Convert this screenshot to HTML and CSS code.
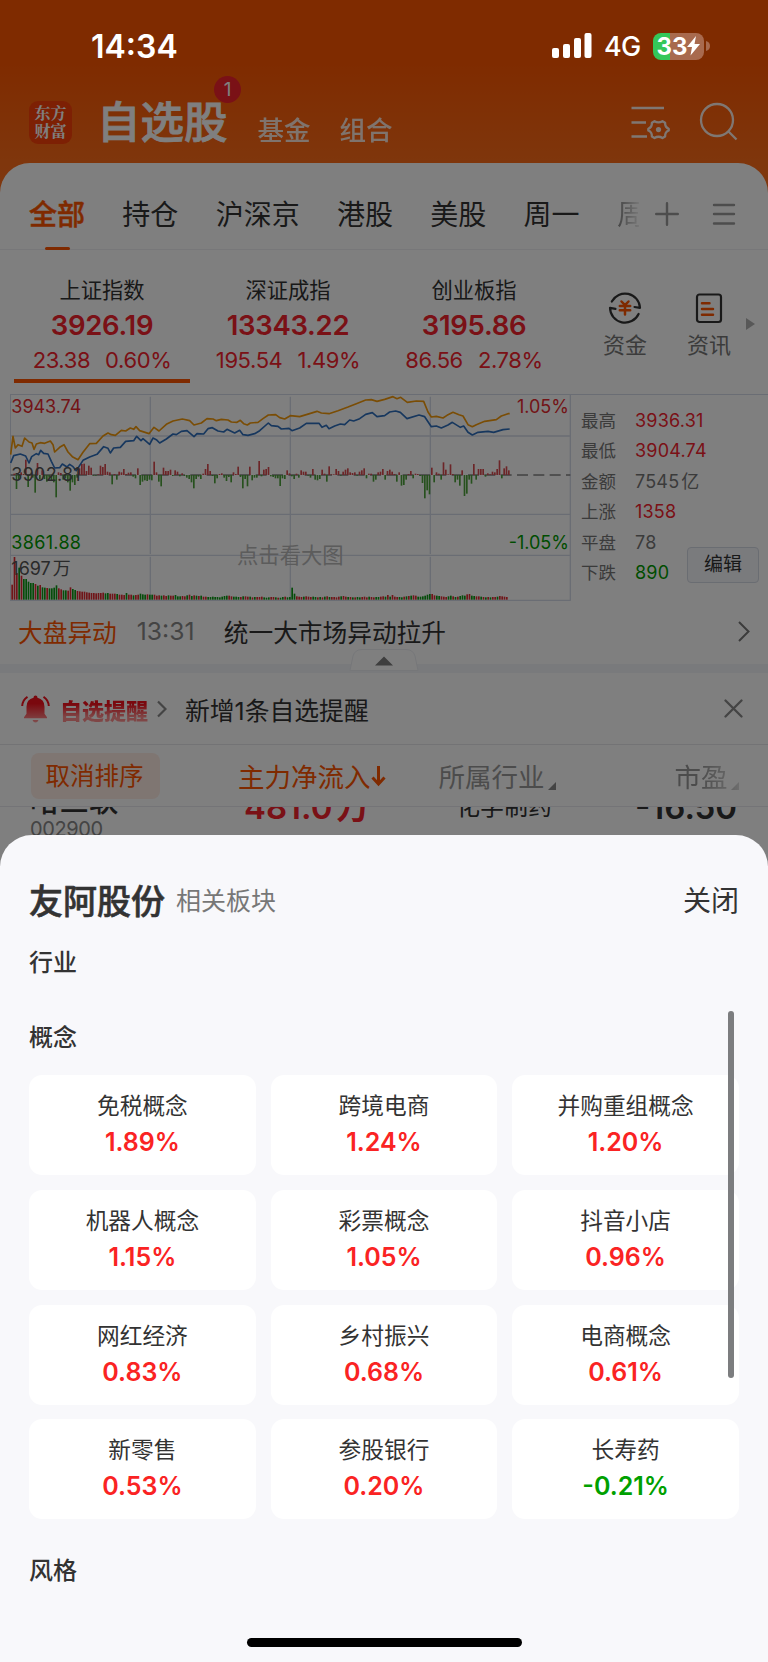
FILE: index.html
```html
<!DOCTYPE html>
<html lang="zh-CN">
<head>
    <meta charset="UTF-8">
    <meta name="viewport" content="width=device-width, initial-scale=1.0">
    <title>自选股</title>
    <link rel="stylesheet" href="styles.css">
</head>
<body>
    <div class="phone">
        <div class="status-bar">
            <span class="time">14:34</span>
            <div class="status-right">
                <svg class="signal" width="40" height="26" viewBox="0 0 40 26" fill="#fff">
                    <rect x="0" y="15" width="7" height="10" rx="2"/>
                    <rect x="11" y="11" width="7" height="14" rx="2"/>
                    <rect x="22" y="5" width="7" height="20" rx="2"/>
                    <rect x="32.5" y="0" width="7" height="25" rx="2"/>
                </svg>
                <span class="network">4G</span>
                <div class="battery">
                    <span>33</span>
                    <svg width="13" height="20" viewBox="0 0 13 20" fill="#fff"><path d="M9 0 0 11h5L3.500 19.500 13 8H7.500z"/></svg>
                </div>
                <svg class="battery-cap" width="4" height="10" viewBox="0 0 4 10"><path d="M0 0q4 1 4 5T0 10z" fill="#a86a4e"/></svg>
            </div>
        </div>

        <div class="page">
            <header class="header">
                <div class="logo"><span>东方</span><span>财富</span></div>
                <h1>自选股<i class="badge">1</i></h1>
                <a class="nav">基金</a>
                <a class="nav">组合</a>
                <svg class="icon-setting" width="40" height="36" viewBox="0 0 40 36" fill="none" stroke="#fff" stroke-width="2.300">
                    <path d="M0.500 3H33M0.500 17.500H15M0.500 31.500H16"/>
                    <path d="M23.500 16.200q4 2.500 8 0l2.600 1.500q-.2 4.500 3.600 6v1.800q-3.800 1.500-3.600 6l-2.600 1.500q-4-2.500-8 0l-2.600-1.500q.2-4.500-3.600-6v-1.800q3.800-1.500 3.600-6z" stroke-linejoin="round"/>
                    <circle cx="27.500" cy="24.600" r="2.600" fill="#fff" stroke="none"/>
                </svg>
                <svg class="icon-search" width="40" height="40" viewBox="0 0 40 40" fill="none" stroke="#fff" stroke-width="2.300">
                    <circle cx="18" cy="18" r="16"/>
                    <path d="M29.500 29.500 37.500 37.500"/>
                </svg>
            </header>

            <main class="content">
                <nav class="tabs">
                    <a class="active">全部</a>
                    <a>持仓</a>
                    <a>沪深京</a>
                    <a>港股</a>
                    <a>美股</a>
                    <a>周一</a>
                    <a class="fade">周</a>
                    <svg class="tab-add" width="24" height="24" viewBox="0 0 24 24" stroke="#9a9a9a" stroke-width="2.400" stroke-linecap="round"><path d="M1.200 12h21.600M12 1.200v21.600"/></svg>
                    <svg class="tab-menu" width="24" height="24" viewBox="0 0 24 24" stroke="#9a9a9a" stroke-width="2.400" stroke-linecap="round"><path d="M2 3h20M2 12h20M2 21.500h20"/></svg>
                </nav>

                <section class="indexes">
                    <div class="index active">
                        <div class="index-name">上证指数</div>
                        <div class="index-value">3926.19</div>
                        <div class="index-change"><span>23.38</span><span>0.60%</span></div>
                    </div>
                    <div class="index">
                        <div class="index-name">深证成指</div>
                        <div class="index-value">13343.22</div>
                        <div class="index-change"><span>195.54</span><span>1.49%</span></div>
                    </div>
                    <div class="index">
                        <div class="index-name">创业板指</div>
                        <div class="index-value">3195.86</div>
                        <div class="index-change"><span>86.56</span><span>2.78%</span></div>
                    </div>
                    <div class="shortcut money">
                        <svg width="34" height="34" viewBox="0 0 34 34" fill="none" stroke="#333" stroke-width="2.200" stroke-linecap="round" stroke-linejoin="round">
                            <path d="M3.800 10.500A15 15 0 0 1 32 16.800L26.500 16"/>
                            <path d="M30.600 23A15 15 0 0 1 2 16.800L7.500 17.800"/>
                            <path d="M13.500 10.500 17 14.200 20.500 10.500M11.800 15h10.400M11.800 19.300h10.400M17 14.500V23.500" stroke="#ff5500" stroke-width="2.500"/>
                        </svg>
                        <span>资金</span>
                    </div>
                    <div class="shortcut news">
                        <svg width="34" height="34" viewBox="0 0 34 34" fill="none" stroke="#333" stroke-width="2.200" stroke-linecap="round">
                            <rect x="5" y="3.500" width="24" height="27.500" rx="2.500"/>
                            <path d="M10 12.200h7.500M10 18h11M10 23.800h11" stroke="#ff5500" stroke-width="2.500"/>
                        </svg>
                        <span>资讯</span>
                    </div>
                    <svg class="more" width="9" height="12" viewBox="0 0 9 12"><path d="M0 0 9 6 0 12z" fill="#b0b0b0"/></svg>
                </section>

                <section class="market">
                    <svg class="chart" width="562" height="208" viewBox="0 0 1686 624">
                        <g fill="none" stroke="#d5dae8" stroke-width="4">
                            <path d="M1 0V620M1681 0V620"/>
                            <path d="M421 8V480M421 488V618M841 8V480M841 488V618M1261 8V480M1261 488V618"/>
                            <path d="M0 126H1681M0 361H1681M0 484H1681M0 619H1681"/>
                        </g>
                        <text class="watermark" x="841" y="508" text-anchor="middle">点击看大图</text>
                        <path d="M2 243H1681" stroke="#444" stroke-width="3" stroke-dasharray="33 16"/>
                        <g id="flow"></g>
                        <g id="volume"></g>
                        <polyline class="line price" points="2,207 11,185 31,180 47,186 57,207 65,188 79,179 86,182 92,169 101,178 114,180 124,202 134,222 149,221 157,210 171,219 179,211 189,218 199,230 219,199 239,189 261,181 281,158 294,163 301,177 311,162 331,160 347,142 371,140 380,127 393,140 399,134 419,151 429,132 439,137 449,147 469,135 489,120 499,122 514,112 531,110 552,128 561,119 581,120 594,104 607,101 624,111 641,114 651,106 674,117 689,109 699,122 714,124 734,119 749,110 775,87 784,95 804,97 814,105 837,103 846,110 869,102 889,88 927,88 936,100 949,94 957,104 974,96 991,90 1004,92 1019,78 1031,81 1049,74 1067,61 1087,56 1101,68 1124,65 1139,54 1157,51 1171,55 1191,74 1227,63 1244,68 1264,98 1279,96 1294,102 1314,93 1327,85 1351,100 1361,96 1374,115 1387,123 1404,115 1434,112 1451,115 1479,107 1499,105"/>
                        <polyline class="line average" points="2,182 9,127 16,162 24,152 36,157 44,132 57,144 66,147 72,166 79,150 91,146 104,148 121,141 129,152 134,174 149,160 162,152 174,174 187,188 204,197 219,175 239,149 259,148 279,126 294,117 304,122 316,124 334,109 347,111 361,102 371,106 378,98 389,110 417,119 432,100 447,111 469,91 489,81 517,75 539,80 552,93 574,87 591,74 609,75 619,80 634,76 654,78 664,84 681,85 691,79 701,89 712,93 721,87 744,85 759,74 775,63 797,62 809,71 824,75 841,65 869,68 889,62 921,52 934,57 957,59 984,50 1014,39 1039,29 1067,18 1084,17 1101,22 1124,16 1149,8 1161,14 1172,10 1192,25 1219,21 1241,22 1254,54 1264,69 1279,67 1299,72 1311,64 1329,55 1347,62 1359,66 1374,92 1387,98 1399,92 1424,82 1459,77 1474,66 1494,59 1499,59"/>
                        <text class="up" x="4" y="56" textLength="210">3943.74</text>
                        <text class="flat" x="4" y="261" textLength="208">3902.81</text>
                        <text class="down" x="4" y="464" textLength="209">3861.88</text>
                        <text class="flat" x="4" y="542">1697<tspan dx="6">万</tspan></text>
                        <text class="up" x="1677" y="56" text-anchor="end">1.05%</text>
                        <text class="down" x="1677" y="464" text-anchor="end">-1.05%</text>
                    </svg>
                    <dl class="stats">
                        <dt>最高</dt><dd class="red">3936.31</dd>
                        <dt>最低</dt><dd class="red">3904.74</dd>
                        <dt>金额</dt><dd>7545<span class="unit">亿</span></dd>
                        <dt>上涨</dt><dd class="red">1358</dd>
                        <dt>平盘</dt><dd>78</dd>
                        <dt>下跌</dt><dd class="green">890</dd>
                    </dl>
                    <button class="edit">编辑</button>
                </section>

                <section class="event">
                    <span class="event-tag">大盘异动</span>
                    <span class="event-time">13:31</span>
                    <span class="event-text">统一大市场异动拉升</span>
                    <svg width="12" height="21" viewBox="0 0 12 21" fill="none" stroke="#777" stroke-width="2"><path d="M1 1 10.500 10.500 1 20"/></svg>
                </section>
                <div class="divider">
                    <svg class="fold" width="70" height="24" viewBox="0 0 70 24">
                        <path d="M1 22.500 4 8Q6 1.500 13 1.500H57Q64 1.500 66 8L69 22.500z" fill="#fff" stroke="#eceef3"/>
                        <path d="M35 8.500 44 17.500H26z" fill="#7c7c7c"/>
                    </svg>
                </div>

                <section class="alert">
                    <svg class="bell" width="29" height="28" viewBox="0 0 29 28">
                        <defs>
                            <linearGradient id="bellColor" x1="0" y1="0" x2="0" y2="1">
                                <stop offset="0.300" stop-color="#f5101c"/>
                                <stop offset="1" stop-color="#ff9a9a"/>
                            </linearGradient>
                        </defs>
                        <path d="M14.500 0.500q2 0 2 2.200 7 1.700 7 9v7l2.500 3.600v1H3v-1l2.500-3.600v-7q0-7.300 7-9 0-2.200 2-2.200zM11.500 25h6q-1 2.500-3 2.500t-3-2.500z" fill="url(#bellColor)"/>
                        <path d="M1.200 11Q1.500 5 6.500 1.800M27.800 11Q27.500 5 22.500 1.800" fill="none" stroke="#f5101c" stroke-width="2"/>
                    </svg>
                    <b class="alert-title">自选提醒</b>
                    <svg class="alert-arrow" width="10" height="18" viewBox="0 0 10 18" fill="none" stroke="#888" stroke-width="2.200"><path d="M1 1.500 8.500 9 1 16.500"/></svg>
                    <span class="alert-text">新增1条自选提醒</span>
                    <svg class="alert-close" width="19" height="19" viewBox="0 0 19 19" stroke="#888" stroke-width="2.300" stroke-linecap="round"><path d="M1.500 1.500l16 16M17.500 1.500l-16 16"/></svg>
                </section>

                <section class="sort">
                    <span class="sort-cancel">取消排序</span>
                    <span class="sort-item current">主力净流入<svg width="15" height="22" viewBox="0 0 15 22" fill="none" stroke="#ff5500" stroke-width="3"><path d="M7.500 1v18M1.500 12.500l6 6.500 6-6.500"/></svg></span>
                    <span class="sort-item industry">所属行业<svg width="8" height="8" viewBox="0 0 8 8" fill="#888"><path d="M8 0v8H0z"/></svg></span>
                    <span class="sort-item pe">市盈<svg width="8" height="8" viewBox="0 0 8 8" fill="#888"><path d="M8 0v8H0z"/></svg></span>
                </section>

                <section class="stock">
                    <div class="stock-name">哈三联<small>002900</small></div>
                    <div class="stock-flow">481.0<span>万</span></div>
                    <div class="stock-industry">化学制药</div>
                    <div class="stock-pe">-16.50</div>
                </section>
            </main>
            <div class="mask"></div>
        </div>

        <section class="sheet">
            <div class="sheet-head">
                <h2>友阿股份</h2>
                <span class="sub">相关板块</span>
                <a class="close">关闭</a>
            </div>
            <h3 class="group-industry">行业</h3>
            <h3 class="group-concept">概念</h3>
            <div class="cards">
                <div class="card"><span>免税概念</span><b>1.89%</b></div>
                <div class="card"><span>跨境电商</span><b>1.24%</b></div>
                <div class="card"><span>并购重组概念</span><b>1.20%</b></div>
                <div class="card"><span>机器人概念</span><b>1.15%</b></div>
                <div class="card"><span>彩票概念</span><b>1.05%</b></div>
                <div class="card"><span>抖音小店</span><b>0.96%</b></div>
                <div class="card"><span>网红经济</span><b>0.83%</b></div>
                <div class="card"><span>乡村振兴</span><b>0.68%</b></div>
                <div class="card"><span>电商概念</span><b>0.61%</b></div>
                <div class="card"><span>新零售</span><b>0.53%</b></div>
                <div class="card"><span>参股银行</span><b>0.20%</b></div>
                <div class="card"><span>长寿药</span><b class="fall">-0.21%</b></div>
            </div>
            <h3 class="group-style">风格</h3>
            <div class="scrollbar"></div>
            <div class="home-indicator"></div>
        </section>
    </div>

    <script>
        // 每分钟一根柱子
        const step = 7;
        const flow = [0,4,-42,-12,8,3,46,-36,0,-8,-53,36,-12,14,-12,-20,-8,-16,-22,-67,8,6,-14,-10,-22,-47,-22,-30,-8,20,33,34,12,28,22,-2,-2,2,28,24,33,10,8,-28,3,-14,10,8,18,3,7,8,-5,-10,20,-30,-20,-16,-18,-14,-16,40,8,-20,-34,22,12,12,16,-3,14,10,-4,5,-3,-8,-12,-22,-40,-12,-5,-12,4,18,33,12,-3,-25,-10,3,5,-8,-18,-6,-22,8,3,25,-6,-40,-12,-34,25,-16,-8,-8,42,-4,16,18,24,-4,-6,-10,-10,-33,-10,-12,14,5,-4,-12,4,-8,14,10,10,-2,-8,18,-14,-16,-12,16,4,-20,26,2,2,18,12,-2,10,16,20,8,6,8,-2,10,14,20,-10,4,4,-20,-14,8,10,18,-14,12,16,10,3,-20,8,-32,-30,-14,3,12,-10,4,3,-3,-24,-70,-46,-58,22,-22,8,4,-14,38,16,2,32,3,-22,-14,-32,14,-63,-56,-14,-26,33,-14,18,18,18,-5,5,2,10,8,18,44,-10,20,26,14];
        const volume = [45,128,80,96,72,62,62,54,50,50,47,42,44,37,36,35,34,34,36,43,34,31,28,28,27,37,32,29,26,25,24,24,22,21,20,20,19,20,20,21,19,20,18,18,18,17,15,15,14,20,15,15,13,14,15,18,16,15,16,15,15,15,12,13,12,13,11,13,12,12,14,10,10,11,10,13,15,11,13,12,11,12,9,9,8,8,9,8,8,7,9,11,12,12,10,9,9,8,8,10,10,9,9,7,8,8,8,9,7,6,7,8,8,7,6,6,8,9,7,8,36,18,10,9,8,9,10,9,8,9,8,7,8,7,9,10,8,8,8,7,9,10,11,9,8,8,7,7,8,7,8,9,7,9,8,7,8,8,9,10,9,14,9,14,9,8,8,7,9,10,11,12,13,12,9,9,10,12,15,17,17,13,12,11,10,9,8,10,12,10,8,9,11,13,12,16,17,12,11,10,10,9,8,7,8,7,8,8,9,11,10,9,8];
        const colors = 'rrrgrgggggrgrggrggggrrggrrggrrrrrrrrrrrrggrrrgrrrgrrgrrgggrggrrrgrrgrrgggrrgrgrgrgrrgggggggggrrgggrgrrgrgrrrgggrrgrggrggrgrrrgrrrggrgrgrgrrrrgrrgrgrggrrrgrrggrrgrgrrrggrgrgrrggggggrrggrrrggrgrgggrrggrrgrgrgrrgr';

        function bar(x, y, height, color) {
            return `<rect x="${x}" y="${y}" width="5" height="${height}" fill="${color}"/>`;
        }

        document.getElementById('flow').innerHTML = flow.map((v, i) =>
            bar(3 + i * step, v > 0 ? 243 - v : 243, Math.abs(v), v > 0 ? '#d84b50' : '#4ea33c')
        ).join('');

        document.getElementById('volume').innerHTML = volume.map((v, i) =>
            bar(4 + i * step, 617 - v, v, i === 120 || colors[i] === 'g' ? '#0a9a14' : '#e02a32')
        ).join('');
    </script>
</body>
</html>
```
FILE: styles.css
```css
* {
    box-sizing: border-box;
}
body {
    margin: 0;
    font-family: Inter, "Noto Sans CJK SC", sans-serif;
    color: #333;
}
svg {
    display: block;
    flex: none;
}
h1, h2, h3, dl, dd {
    margin: 0;
}
.phone {
    position: relative;
    width: 768px;
    height: 1662px;
    overflow: hidden;
}

/* status bar */
.status-bar {
    position: absolute;
    z-index: 2;
    top: 0;
    left: 0;
    width: 100%;
    height: 92px;
    padding: 0 58px 0 91px;
    display: flex;
    justify-content: space-between;
    align-items: center;
    color: #fff;
}
.time {
    font-size: 32px;
    font-weight: 600;
}
.status-right {
    display: flex;
    align-items: center;
}
.network {
    margin-left: 12px;
    width: 49px;
    font-size: 27px;
    font-weight: 500;
    letter-spacing: -0.8px;
}
.battery {
    width: 51px;
    height: 27px;
    border-radius: 8px;
    background: linear-gradient(90deg, #34c759 17px, #a86a4e 17px);
    display: flex;
    align-items: center;
    justify-content: center;
    font-size: 24px;
    font-weight: 700;
    line-height: 27px;
}
.battery-cap {
    margin-left: 2px;
}

/* page under the sheet */
.page {
    position: relative;
    height: 866px;
    overflow: hidden;
    background: linear-gradient(#fe5600 60px, #ff6c18 160px, #ff7020 200px);
}
.mask {
    position: absolute;
    top: 0;
    left: 0;
    width: 100%;
    height: 100%;
    background: rgba(0, 0, 0, 0.5);
    pointer-events: none;
}
.header {
    height: 163px;
    padding: 92px 29px 0;
    display: flex;
    align-items: flex-start;
    color: #fff;
}
.logo {
    width: 43px;
    height: 43px;
    margin-top: 9px;
    padding-top: 3px;
    border-radius: 9px;
    background: #fb4008;
    text-align: center;
    font-size: 16px;
    font-weight: 700;
    line-height: 18px;
}
.logo span {
    display: block;
    font-family: "Noto Serif CJK SC", "Noto Sans CJK SC", sans-serif;
}
h1 {
    position: relative;
    margin-left: 25px;
    font-size: 43.500px;
    font-weight: 500;
    line-height: 60px;
    -webkit-text-stroke: 0.8px #fff;
}
.badge {
    position: absolute;
    left: 117px;
    top: -16px;
    width: 27px;
    height: 27px;
    border-radius: 50%;
    background: #f5222d;
    font-size: 19px;
    font-style: normal;
    font-weight: 400;
    line-height: 27px;
    text-align: center;
    -webkit-text-stroke: 0;
}
.nav {
    margin: 19px 0 0 29px;
    font-size: 26.500px;
    font-weight: 500;
    line-height: 38px;
    opacity: 0.85;
}
.nav:first-of-type {
    margin-left: 30px;
}
.icon-setting {
    margin: 13px 0 0 auto;
    opacity: 0.9;
}
.icon-search {
    margin: 10px 0 0 28px;
    opacity: 0.9;
}
.content {
    height: 703px;
    border-radius: 30px 30px 0 0;
    background: #fff;
    overflow: hidden;
}
.tabs {
    height: 87px;
    padding: 0 30px 0 29px;
    border-bottom: 1px solid #efeff2;
    display: flex;
    align-items: center;
    gap: 37.300px;
    font-size: 28px;
    line-height: 87px;
}
.tabs a {
    height: 87px;
    margin-top: 19px;
    flex: none;
}
.tabs .active {
    position: relative;
    color: #ff5500;
    font-weight: 500;
    -webkit-text-stroke: 0.5px #ff5500;
}
.tabs .active::after {
    content: "";
    position: absolute;
    left: 16px;
    bottom: 9px;
    width: 25px;
    height: 3px;
    border-radius: 2px;
    background: #ff5500;
}
.tabs .fade {
    width: 22px;
    overflow: hidden;
    background: linear-gradient(90deg, #888, #eee);
    background-clip: text;
    -webkit-background-clip: text;
    color: transparent;
}
.tab-add {
    margin: 16px 0 0 -21px;
}
.tab-menu {
    margin: 16px 0 0 -4px;
}

/* indexes */
.indexes {
    height: 144px;
    padding: 24px 0 0 14px;
    display: flex;
}
.index {
    width: 176px;
    height: 109px;
    margin-right: 10px;
    text-align: center;
}
.index.active {
    border-bottom: 4px solid #ff5500;
}
.index-name {
    font-size: 21.300px;
    line-height: 32px;
}
.index-value {
    font-size: 27.500px;
    font-weight: 600;
    line-height: 38px;
    letter-spacing: -0.3px;
    color: #f5222d;
}
.index-change {
    display: flex;
    justify-content: center;
    gap: 15px;
    font-size: 22px;
    line-height: 32px;
    letter-spacing: -0.4px;
    color: #f5222d;
}
.shortcut {
    width: 48px;
    margin: 17px 0 0 29px;
    display: flex;
    flex-direction: column;
    align-items: center;
    font-size: 22px;
    line-height: 40px;
    color: #777;
}
.news {
    margin-left: 36px;
}
.more {
    margin: 44px 0 0 13px;
}

/* chart */
.market {
    position: relative;
    height: 211px;
    padding-left: 10px;
    display: flex;
    background: linear-gradient(#d5dae8, #d5dae8) 10px 0 / 100% 1px no-repeat;
}
.chart {
    font-size: 54px;
}
.line {
    fill: none;
    stroke-width: 5;
    stroke-linejoin: round;
}
.price {
    stroke: #2e6fbd;
}
.average {
    stroke: #f59a0b;
}
.watermark {
    font-size: 64px;
    fill: #b8b8b8;
}
.up {
    fill: #e6282e;
}
.down {
    fill: #009a00;
}
.flat {
    fill: #555;
}
.stats {
    margin-left: 9px;
    padding-top: 12px;
    display: grid;
    grid-template-columns: 54px auto;
    grid-auto-rows: 30.400px;
    align-content: start;
    font-size: 17.500px;
    line-height: 30px;
    color: #777;
}
.stats dd {
    font-size: 18px;
    letter-spacing: 0.2px;
}
.unit {
    margin-left: 2px;
}
.red {
    color: #f5222d;
}
.green {
    color: #009a00;
}
.edit {
    position: absolute;
    right: 9px;
    top: 153px;
    width: 72px;
    height: 36px;
    padding: 0;
    border: 1px solid #d5dae4;
    border-radius: 4px;
    background: #f4f6fb;
    font: 19px/34px Inter, "Noto Sans CJK SC", sans-serif;
    color: #333;
}

/* market event */
.event {
    height: 59px;
    padding: 0 18px 7px 18px;
    display: flex;
    align-items: center;
    font-size: 24.700px;
}
.event-tag {
    color: #ff5500;
}
.event-time {
    width: 87px;
    margin-left: 20px;
    color: #888;
}
.event svg {
    margin-left: auto;
}
.divider {
    position: relative;
    height: 9px;
    background: #f2f4f9;
}
.fold {
    position: absolute;
    left: 349px;
    top: -16px;
}

/* alert */
.alert {
    height: 72px;
    padding: 0 25px 0 21px;
    border-bottom: 1px solid #e6e6ea;
    display: flex;
    align-items: center;
    font-size: 24.800px;
}
.alert-title {
    margin-left: 10px;
    font-size: 22px;
    font-weight: 900;
    background: linear-gradient(#f5101c 35%, #ff8c8c 75%);
    background-clip: text;
    -webkit-background-clip: text;
    color: transparent;
}
.alert-arrow {
    margin: 0 18px 0 9px;
}
.alert-close {
    margin-left: auto;
}

/* sort header */
.sort {
    height: 62px;
    padding-left: 31px;
    border-bottom: 1px solid #e9e9ee;
    display: flex;
    align-items: center;
    font-size: 26.500px;
    color: #999;
}
.sort-cancel {
    width: 129px;
    height: 46px;
    border-radius: 8px;
    background: #ffece4;
    font-size: 24.500px;
    line-height: 47px;
    text-align: center;
    text-indent: -2px;
    color: #ff5500;
}
.sort-item {
    display: flex;
    align-items: center;
}
.current {
    margin-left: 78px;
    color: #ff5500;
}
.industry {
    margin-left: 53px;
}
.industry svg, .pe svg {
    margin: 21px 0 0 3px;
}
.pe {
    margin-left: 119px;
    -webkit-mask-image: linear-gradient(90deg, #000 40%, rgba(0, 0, 0, 0.3));
    mask-image: linear-gradient(90deg, #000 40%, rgba(0, 0, 0, 0.3));
}

/* stock row, partly scrolled under the header */
.stock {
    height: 60px;
    padding-left: 30px;
    overflow: hidden;
    display: flex;
}
.stock-name {
    width: 214px;
    margin-top: -26px;
    font-size: 29.500px;
    font-weight: 500;
    line-height: 38px;
}
.stock-name small {
    display: block;
    font-size: 20px;
    font-weight: 400;
    line-height: 20px;
    letter-spacing: -0.4px;
    color: #888;
}
.stock-flow {
    width: 212px;
    margin-top: -22px;
    font-size: 33px;
    font-weight: 600;
    line-height: 44px;
    color: #f5222d;
}
.stock-flow span {
    margin-left: 4px;
}
.stock-industry {
    width: 179px;
    margin-top: -18px;
    font-size: 24px;
    line-height: 36px;
}
.stock-pe {
    margin-top: -22px;
    font-size: 33px;
    font-weight: 600;
    line-height: 44px;
}

/* bottom sheet */
.sheet {
    position: absolute;
    top: 835px;
    left: 0;
    width: 768px;
    height: 827px;
    padding: 0 29px;
    border-radius: 32px 32px 0 0;
    background: #f8f8fb;
}
.sheet-head {
    height: 104px;
    padding-top: 24px;
    display: flex;
    align-items: center;
}
h2 {
    font-size: 34px;
    font-weight: 500;
    -webkit-text-stroke: 0.6px #333;
}
.sub {
    margin-left: 11px;
    font-size: 25px;
    color: #777;
}
.close {
    margin-left: auto;
    font-size: 28px;
}
h3 {
    font-size: 24px;
    font-weight: 500;
    line-height: 36px;
}
.group-industry {
    margin-top: 6px;
}
.group-concept {
    margin-top: 39px;
}
.cards {
    margin-top: 19px;
    display: grid;
    grid-template-columns: repeat(3, 1fr);
    grid-auto-rows: 100px;
    gap: 14.800px;
}
.card {
    padding-top: 13px;
    border-radius: 13px;
    background: #fff;
    text-align: center;
}
.card span {
    display: block;
    font-size: 22.700px;
    line-height: 36px;
}
.card b {
    display: block;
    font-size: 25px;
    font-weight: 600;
    line-height: 36px;
    color: #fa2323;
}
.card .fall {
    color: #00a000;
}
.group-style {
    margin-top: 34px;
}
.scrollbar {
    position: absolute;
    left: 728px;
    top: 176px;
    width: 6px;
    height: 367px;
    border-radius: 3px;
    background: #7c7d7f;
}
.home-indicator {
    position: absolute;
    left: 247px;
    top: 803px;
    width: 275px;
    height: 9px;
    border-radius: 5px;
    background: #000;
}
```
